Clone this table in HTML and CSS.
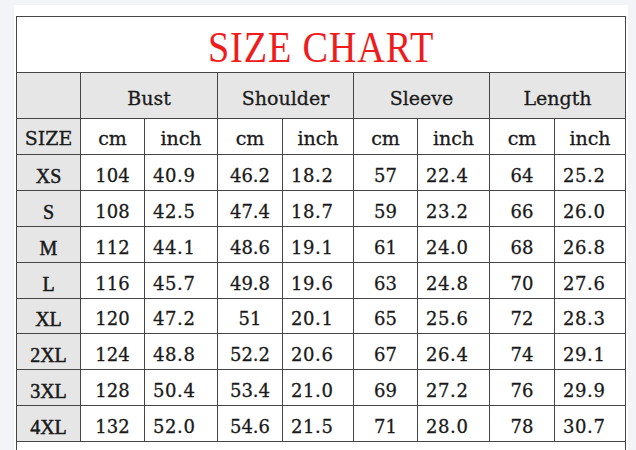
FILE: index.html
```html
<!DOCTYPE html>
<html lang="en">
<head>
<meta charset="utf-8">
<title>Size Chart</title>
<link rel="stylesheet" href="styles.css">
</head>
<body>
<div class="sheet">
  <div class="chart">
    <div class="cell title"><span class="title-text">SIZE CHART</span></div>

    <div class="cell grey h1"></div>
    <div class="cell grey h1 span2 head">Bust</div>
    <div class="cell grey h1 span2 head">Shoulder</div>
    <div class="cell grey h1 span2 head">Sleeve</div>
    <div class="cell grey h1 span2 head">Length</div>

    <div class="cell grey h2 head">SIZE</div>
    <div class="cell h2 head">cm</div>
    <div class="cell h2 head">inch</div>
    <div class="cell h2 head">cm</div>
    <div class="cell h2 head">inch</div>
    <div class="cell h2 head">cm</div>
    <div class="cell h2 head">inch</div>
    <div class="cell h2 head">cm</div>
    <div class="cell h2 head">inch</div>

    <div class="cell grey size">XS</div>
    <div class="cell num">104</div><div class="cell num in">40.9</div>
    <div class="cell num">46.2</div><div class="cell num in">18.2</div>
    <div class="cell num">57</div><div class="cell num in">22.4</div>
    <div class="cell num">64</div><div class="cell num in">25.2</div>

    <div class="cell grey size">S</div>
    <div class="cell num">108</div><div class="cell num in">42.5</div>
    <div class="cell num">47.4</div><div class="cell num in">18.7</div>
    <div class="cell num">59</div><div class="cell num in">23.2</div>
    <div class="cell num">66</div><div class="cell num in">26.0</div>

    <div class="cell grey size">M</div>
    <div class="cell num">112</div><div class="cell num in">44.1</div>
    <div class="cell num">48.6</div><div class="cell num in">19.1</div>
    <div class="cell num">61</div><div class="cell num in">24.0</div>
    <div class="cell num">68</div><div class="cell num in">26.8</div>

    <div class="cell grey size">L</div>
    <div class="cell num">116</div><div class="cell num in">45.7</div>
    <div class="cell num">49.8</div><div class="cell num in">19.6</div>
    <div class="cell num">63</div><div class="cell num in">24.8</div>
    <div class="cell num">70</div><div class="cell num in">27.6</div>

    <div class="cell grey size">XL</div>
    <div class="cell num">120</div><div class="cell num in">47.2</div>
    <div class="cell num">51</div><div class="cell num in">20.1</div>
    <div class="cell num">65</div><div class="cell num in">25.6</div>
    <div class="cell num">72</div><div class="cell num in">28.3</div>

    <div class="cell grey size">2XL</div>
    <div class="cell num">124</div><div class="cell num in">48.8</div>
    <div class="cell num">52.2</div><div class="cell num in">20.6</div>
    <div class="cell num">67</div><div class="cell num in">26.4</div>
    <div class="cell num">74</div><div class="cell num in">29.1</div>

    <div class="cell grey size">3XL</div>
    <div class="cell num">128</div><div class="cell num in">50.4</div>
    <div class="cell num">53.4</div><div class="cell num in">21.0</div>
    <div class="cell num">69</div><div class="cell num in">27.2</div>
    <div class="cell num">76</div><div class="cell num in">29.9</div>

    <div class="cell grey size">4XL</div>
    <div class="cell num">132</div><div class="cell num in">52.0</div>
    <div class="cell num">54.6</div><div class="cell num in">21.5</div>
    <div class="cell num">71</div><div class="cell num in">28.0</div>
    <div class="cell num">78</div><div class="cell num in">30.7</div>

    <div class="cell note"></div>
  </div>
</div>
</body>
</html>
```

FILE: styles.css
```css
html, body {
  margin: 0;
  padding: 0;
}

body {
  width: 636px;
  height: 450px;
  overflow: hidden;
  background: #f3f4f7;
}

.sheet {
  margin: 5px 0 0 14px;
  width: 614px;
  height: 460px;
  box-sizing: border-box;
  padding: 11px 2px 0 2px;
  background: #ffffff;
}

.chart {
  display: grid;
  grid-template-columns: 63px 63px 72px 64px 70px 63px 71px 64px 70px;
  grid-template-rows: 55px 45px 35px 35px 35px 35px 35px 34px 35px 35px 35px 40px;
  gap: 1px;
  padding: 1px;
  width: 610px;
  box-sizing: border-box;
  background: #454545;
}

.cell {
  display: flex;
  align-items: center;
  justify-content: center;
  background: #ffffff;
  color: #1a1a1a;
  box-sizing: border-box;
}

.grey {
  background: #e6e6e6;
}

.title {
  grid-column: 1 / -1;
  padding-top: 6px;
}

.title-text {
  display: inline-block;
  font-family: "Liberation Serif", "Times New Roman", serif;
  font-size: 45px;
  line-height: 1;
  color: #ee1c1c;
  transform: scaleX(0.85);
  letter-spacing: 1px;
}

.span2 {
  grid-column: span 2;
}

.head {
  font-family: "DejaVu Serif", serif;
  font-size: 19px;
  line-height: 1;
  -webkit-text-stroke: 0.3px #1a1a1a;
}

.h1 {
  padding-top: 5px;
}

.h2 {
  padding-top: 4px;
}

.num {
  font-family: "DejaVu Serif", serif;
  font-size: 18px;
  line-height: 1;
  padding-top: 6px;
  -webkit-text-stroke: 0.3px #1a1a1a;
}

.num.in {
  justify-content: flex-start;
  padding-left: 8px;
  letter-spacing: 0.6px;
}

.size {
  font-family: "Liberation Serif", "Times New Roman", serif;
  font-size: 20px;
  line-height: 1;
  font-weight: 400;
  -webkit-text-stroke: 0.5px #1a1a1a;
  padding-top: 6px;
}

.note {
  grid-column: 1 / -1;
}
```
